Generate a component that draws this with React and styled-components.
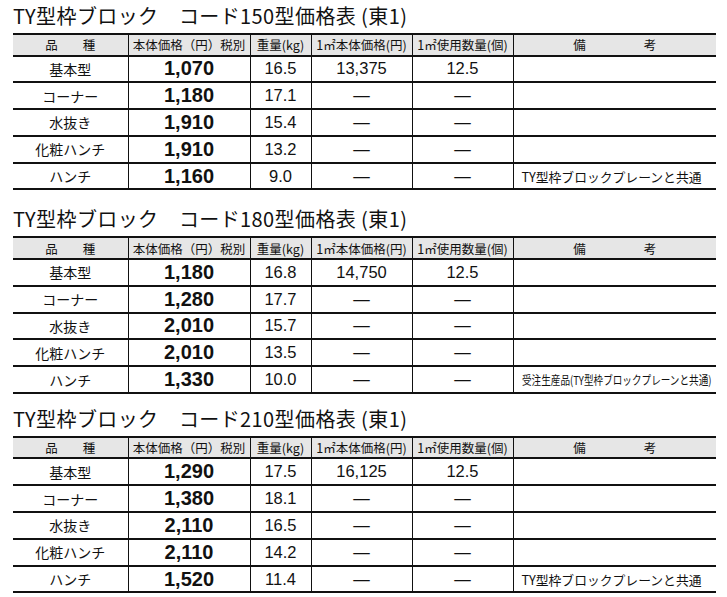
import React from 'react';
import styled, { createGlobalStyle } from 'styled-components';

const GlobalStyle = createGlobalStyle`
    body {
        margin: 0;
        background: #fff;
        color: #111;
        font-family: "Noto Sans CJK JP", "Liberation Sans", sans-serif;
    }
`;

const JP = '"Noto Sans CJK JP", "Liberation Sans", sans-serif';
const NUM = '"Liberation Sans", Arial, sans-serif';

const Page = styled.div`
    width: 727px;
    padding: 0 0 0 13px;
    box-sizing: border-box;
`;

const Section = styled.section`
    margin-bottom: ${props => props.gap}px;
`;

const Title = styled.h2`
    margin: 0;
    height: 33px;
    padding-top: 4px;
    box-sizing: border-box;
    font-family: ${JP};
    font-weight: 400;
    font-size: 20px;
    line-height: 24px;
    letter-spacing: 0.4px;
    color: #111;
    white-space: nowrap;
`;

const Table = styled.table`
    width: 703px;
    border-collapse: collapse;
    table-layout: fixed;
`;

const HeadRow = styled.tr`
    background: #e6e6e6;
    border-top: 2px solid #111;
    border-bottom: 2px solid #111;
`;

const Row = styled.tr`
    border-bottom: 2px solid #111;
`;

const HeadCell = styled.th`
    height: 19.5px;
    padding: 0;
    font-family: ${JP};
    font-weight: 400;
    font-size: 12.5px;
    line-height: 19px;
    text-align: center;
    white-space: nowrap;
    border-right: ${props => (props.last ? 'none' : '1.5px solid #111')};
`;

const Spread = styled.span`
    display: inline-flex;
    gap: ${props => props.gap}px;
`;

const Cell = styled.td`
    height: 24.8px;
    padding: 0;
    text-align: center;
    white-space: nowrap;
    vertical-align: middle;
    border-right: ${props => (props.last ? 'none' : '1.5px solid #111')};
`;

const Name = styled(Cell)`
    font-family: ${JP};
    font-size: 14px;
`;

const Price = styled(Cell)`
    font-family: ${NUM};
    font-weight: 700;
    font-size: 20px;
`;

const Num = styled(Cell)`
    font-family: ${NUM};
    font-size: 16.5px;
`;

const Note = styled(Cell)`
    text-align: left;
    padding-left: 8px;
    font-family: ${JP};
    font-size: 12.8px;
    overflow: visible;
`;

const Narrow = styled.span`
    display: inline-block;
    font-size: 12px;
    transform: scaleX(0.8);
    transform-origin: left center;
`;

const DASH = '—';

const tables = [
    {
        code: '150',
        rows: [
            ['基本型', '1,070', '16.5', '13,375', '12.5', ''],
            ['コーナー', '1,180', '17.1', DASH, DASH, ''],
            ['水抜き', '1,910', '15.4', DASH, DASH, ''],
            ['化粧ハンチ', '1,910', '13.2', DASH, DASH, ''],
            ['ハンチ', '1,160', '9.0', DASH, DASH, 'TY型枠ブロックプレーンと共通'],
        ],
    },
    {
        code: '180',
        rows: [
            ['基本型', '1,180', '16.8', '14,750', '12.5', ''],
            ['コーナー', '1,280', '17.7', DASH, DASH, ''],
            ['水抜き', '2,010', '15.7', DASH, DASH, ''],
            ['化粧ハンチ', '2,010', '13.5', DASH, DASH, ''],
            ['ハンチ', '1,330', '10.0', DASH, DASH, 'narrow'],
        ],
    },
    {
        code: '210',
        rows: [
            ['基本型', '1,290', '17.5', '16,125', '12.5', ''],
            ['コーナー', '1,380', '18.1', DASH, DASH, ''],
            ['水抜き', '2,110', '16.5', DASH, DASH, ''],
            ['化粧ハンチ', '2,110', '14.2', DASH, DASH, ''],
            ['ハンチ', '1,520', '11.4', DASH, DASH, 'TY型枠ブロックプレーンと共通'],
        ],
    },
];

const PriceTable = ({ rows }) => (
    <Table>
        <colgroup>
            <col style={{ width: 115 }} />
            <col style={{ width: 122 }} />
            <col style={{ width: 61 }} />
            <col style={{ width: 101 }} />
            <col style={{ width: 101 }} />
            <col style={{ width: 203 }} />
        </colgroup>
        <thead>
            <HeadRow>
                <HeadCell><Spread gap={25}><span>品</span><span>種</span></Spread></HeadCell>
                <HeadCell>本体価格（円）税別</HeadCell>
                <HeadCell>重量(kg)</HeadCell>
                <HeadCell>1㎡本体価格(円)</HeadCell>
                <HeadCell>1㎡使用数量(個)</HeadCell>
                <HeadCell last><Spread gap={58}><span>備</span><span>考</span></Spread></HeadCell>
            </HeadRow>
        </thead>
        <tbody>
            {rows.map(([name, price, weight, unit, count, note]) => (
                <Row key={name}>
                    <Name>{name}</Name>
                    <Price>{price}</Price>
                    <Num>{weight}</Num>
                    <Num>{unit}</Num>
                    <Num>{count}</Num>
                    <Note last>
                        {note === 'narrow'
                            ? <Narrow>受注生産品(TY型枠ブロックプレーンと共通)</Narrow>
                            : note}
                    </Note>
                </Row>
            ))}
        </tbody>
    </Table>
);

export default function App() {
    return (
        <Page>
            <GlobalStyle />
            {tables.map((t, i) => (
                <Section key={t.code} gap={i === 0 ? 13 : 9}>
                    <Title>TY型枠ブロック　コード{t.code}型価格表 (東1)</Title>
                    <PriceTable rows={t.rows} />
                </Section>
            ))}
        </Page>
    );
}
